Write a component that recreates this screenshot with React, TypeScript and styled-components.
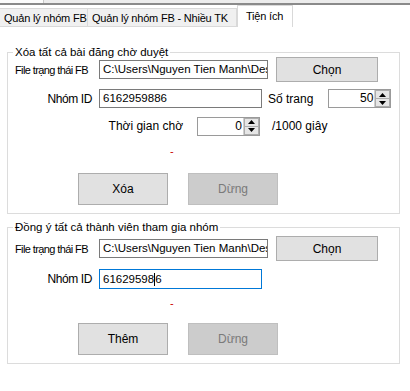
import React from 'react';
import styled, { createGlobalStyle } from 'styled-components';

const GlobalStyle = createGlobalStyle`
  body {
    margin: 0;
    background: #ffffff;
    font-family: "Liberation Sans", Arial, sans-serif;
    font-size: 12px;
    color: #000;
  }
`;

const Window = styled.div`
  width: 410px;
  height: 391px;
  background: #ffffff;
  overflow: hidden;
`;

const TopStrip = styled.div`
  height: 3px;
  background: #ececec;
  border-bottom: 2px solid #8a8a8a;
  display: flex;
`;

const TopPiece = styled.div`
  width: 43px;
  background: #fbfbfb;
  border-right: 1px solid #c8c8c8;
`;

const TabStrip = styled.div`
  display: flex;
  align-items: flex-end;
  height: 22px;
`;

const Tab = styled.div<{ $w: number; $active?: boolean }>`
  box-sizing: border-box;
  width: ${(p) => p.$w}px;
  height: ${(p) => (p.$active ? 22 : 19)}px;
  padding: ${(p) => (p.$active ? '2px 0 0 8px' : '1px 0 0 4px')};
  font-size: 11px;
  letter-spacing: -0.2px;
  line-height: 16px;
  background: ${(p) => (p.$active ? '#ffffff' : '#f0f0f0')};
  border: 1px solid #d9d9d9;
  border-bottom: ${(p) => (p.$active ? 'none' : '1px solid #d9d9d9')};
  border-left: ${(p) => (p.$active ? '1px solid #d9d9d9' : 'none')};
  white-space: nowrap;
  overflow: hidden;
`;

const Page = styled.div`
  padding: 18px 0 0 7px;
  width: 393px;
`;

const Group = styled.fieldset<{ $gap: number; $bottom: number }>`
  margin: 0 0 ${(p) => p.$gap}px 0;
  padding: 0 0 ${(p) => p.$bottom}px 0;
  border: 1px solid #dcdcdc;
  min-width: 0;
`;

const Legend = styled.legend`
  margin-left: 5px;
  padding: 0 2px;
  font-size: 11.5px;
  line-height: 14px;
`;

const Row = styled.div<{ $h: number; $mt: number }>`
  display: flex;
  align-items: center;
  height: ${(p) => p.$h}px;
  margin-top: ${(p) => p.$mt}px;
`;

const Label = styled.div<{ $w: number; $right?: boolean; $pl?: number; $fs?: number; $ls?: number }>`
  box-sizing: border-box;
  width: ${(p) => p.$w}px;
  padding-left: ${(p) => p.$pl ?? 0}px;
  text-align: ${(p) => (p.$right ? 'right' : 'left')};
  white-space: nowrap;
  font-size: ${(p) => p.$fs ?? 12}px;
  letter-spacing: ${(p) => p.$ls ?? 0}px;
`;

const Caption = styled.div<{ $ml: number }>`
  margin-left: ${(p) => p.$ml}px;
  white-space: nowrap;
  font-size: 12px;
`;

const TextBox = styled.div<{ $w: number; $focus?: boolean }>`
  box-sizing: border-box;
  width: ${(p) => p.$w}px;
  height: ${(p) => (p.$focus ? 20 : 19)}px;
  margin-left: 7px;
  padding: 0 0 0 3px;
  border: 1px solid ${(p) => (p.$focus ? '#0078d7' : '#7a7a7a')};
  background: #fff;
  font-size: 11.5px;
  line-height: 17px;
  white-space: nowrap;
  overflow: hidden;
  display: flex;
  align-items: center;
`;

const Caret = styled.span`
  display: inline-block;
  width: 1px;
  height: 13px;
  background: #000;
`;

const Spinner = styled.div<{ $ml: number }>`
  box-sizing: border-box;
  width: 63px;
  height: 19px;
  margin-left: ${(p) => p.$ml}px;
  border: 1px solid #9a9a9a;
  background: #fff;
  display: flex;
`;

const SpinValue = styled.div`
  flex: 1;
  text-align: right;
  padding-right: 1px;
  font-size: 12px;
  line-height: 17px;
`;

const SpinButtons = styled.div`
  width: 15px;
  display: flex;
  flex-direction: column;
  border-left: 1px solid #d0d0d0;
`;

const SpinHalf = styled.div<{ $down?: boolean }>`
  flex: 1;
  display: flex;
  align-items: center;
  justify-content: center;
  background: #e6e6e6;
  border: 1px solid #adadad;
  border-top: ${(p) => (p.$down ? 'none' : '1px solid #adadad')};
`;

const Button = styled.div<{ $disabled?: boolean; $w: number; $h: number; $ml: number }>`
  box-sizing: border-box;
  width: ${(p) => p.$w}px;
  height: ${(p) => p.$h}px;
  margin-left: ${(p) => p.$ml}px;
  display: flex;
  align-items: center;
  justify-content: center;
  font-size: 12px;
  background: ${(p) => (p.$disabled ? '#cccccc' : '#e1e1e1')};
  border: 1px solid ${(p) => (p.$disabled ? '#bfbfbf' : '#adadad')};
  color: ${(p) => (p.$disabled ? '#7a7a7a' : '#000')};
`;

const Dash = styled.div`
  padding-left: 162px;
  color: #cc0000;
  font-size: 11px;
  line-height: 12px;
`;

const Arrow = ({ down }: { down?: boolean }) => (
  <svg width="7" height="4" viewBox="0 0 7 4">
    <path d={down ? 'M0 0 L7 0 L3.5 4 Z' : 'M0 4 L7 4 L3.5 0 Z'} fill="#000" />
  </svg>
);

const NumberBox = ({ value, ml }: { value: string; ml: number }) => (
  <Spinner $ml={ml}>
    <SpinValue>{value}</SpinValue>
    <SpinButtons>
      <SpinHalf>
        <Arrow />
      </SpinHalf>
      <SpinHalf $down>
        <Arrow down />
      </SpinHalf>
    </SpinButtons>
  </Spinner>
);

const filePath = 'C:\\Users\\Nguyen Tien Manh\\Desktop';

export default function App() {
  return (
    <Window>
      <GlobalStyle />
      <TopStrip>
        <TopPiece />
      </TopStrip>
      <TabStrip>
        <Tab $w={88}>Quản lý nhóm FB</Tab>
        <Tab $w={149}>Quản lý nhóm FB - Nhiều TK</Tab>
        <Tab $w={56} $active>Tiện ích</Tab>
      </TabStrip>

      <Page>
        <Group $gap={6} $bottom={8}>
          <Legend>Xóa tất cả bài đăng chờ duyệt</Legend>
          <Row $h={25} $mt={-2}>
            <Label $w={84} $pl={7} $fs={11} $ls={-0.6}>File trạng thái FB</Label>
            <TextBox $w={169}>{filePath}</TextBox>
            <Button $w={102} $h={25} $ml={8}>Chọn</Button>
          </Row>
          <Row $h={21} $mt={6}>
            <Label $w={84} $right $ls={-0.4}>Nhóm ID</Label>
            <TextBox $w={163}>6162959886</TextBox>
            <Caption $ml={6}>Số trang</Caption>
            <NumberBox value="50" ml={15} />
          </Row>
          <Row $h={20} $mt={7}>
            <Label $w={175} $right>Thời gian chờ</Label>
            <NumberBox value="0" ml={14} />
            <Caption $ml={12}>/1000 giây</Caption>
          </Row>
          <Row $h={14} $mt={8}>
            <Dash>-</Dash>
          </Row>
          <Row $h={32} $mt={15}>
            <Button $w={90} $h={32} $ml={70}>Xóa</Button>
            <Button $w={90} $h={32} $ml={20} $disabled>Dừng</Button>
          </Row>
        </Group>

        <Group $gap={0} $bottom={8}>
          <Legend>Đồng ý tất cả thành viên tham gia nhóm</Legend>
          <Row $h={25} $mt={2}>
            <Label $w={84} $pl={7} $fs={11} $ls={-0.6}>File trạng thái FB</Label>
            <TextBox $w={169}>{filePath}</TextBox>
            <Button $w={102} $h={25} $ml={8}>Chọn</Button>
          </Row>
          <Row $h={22} $mt={7}>
            <Label $w={84} $right $ls={-0.4}>Nhóm ID</Label>
            <TextBox $w={163} $focus>
              61629598<Caret />6
            </TextBox>
          </Row>
          <Row $h={14} $mt={6}>
            <Dash>-</Dash>
          </Row>
          <Row $h={32} $mt={13}>
            <Button $w={90} $h={32} $ml={70}>Thêm</Button>
            <Button $w={90} $h={32} $ml={20} $disabled>Dừng</Button>
          </Row>
        </Group>
      </Page>
    </Window>
  );
}
